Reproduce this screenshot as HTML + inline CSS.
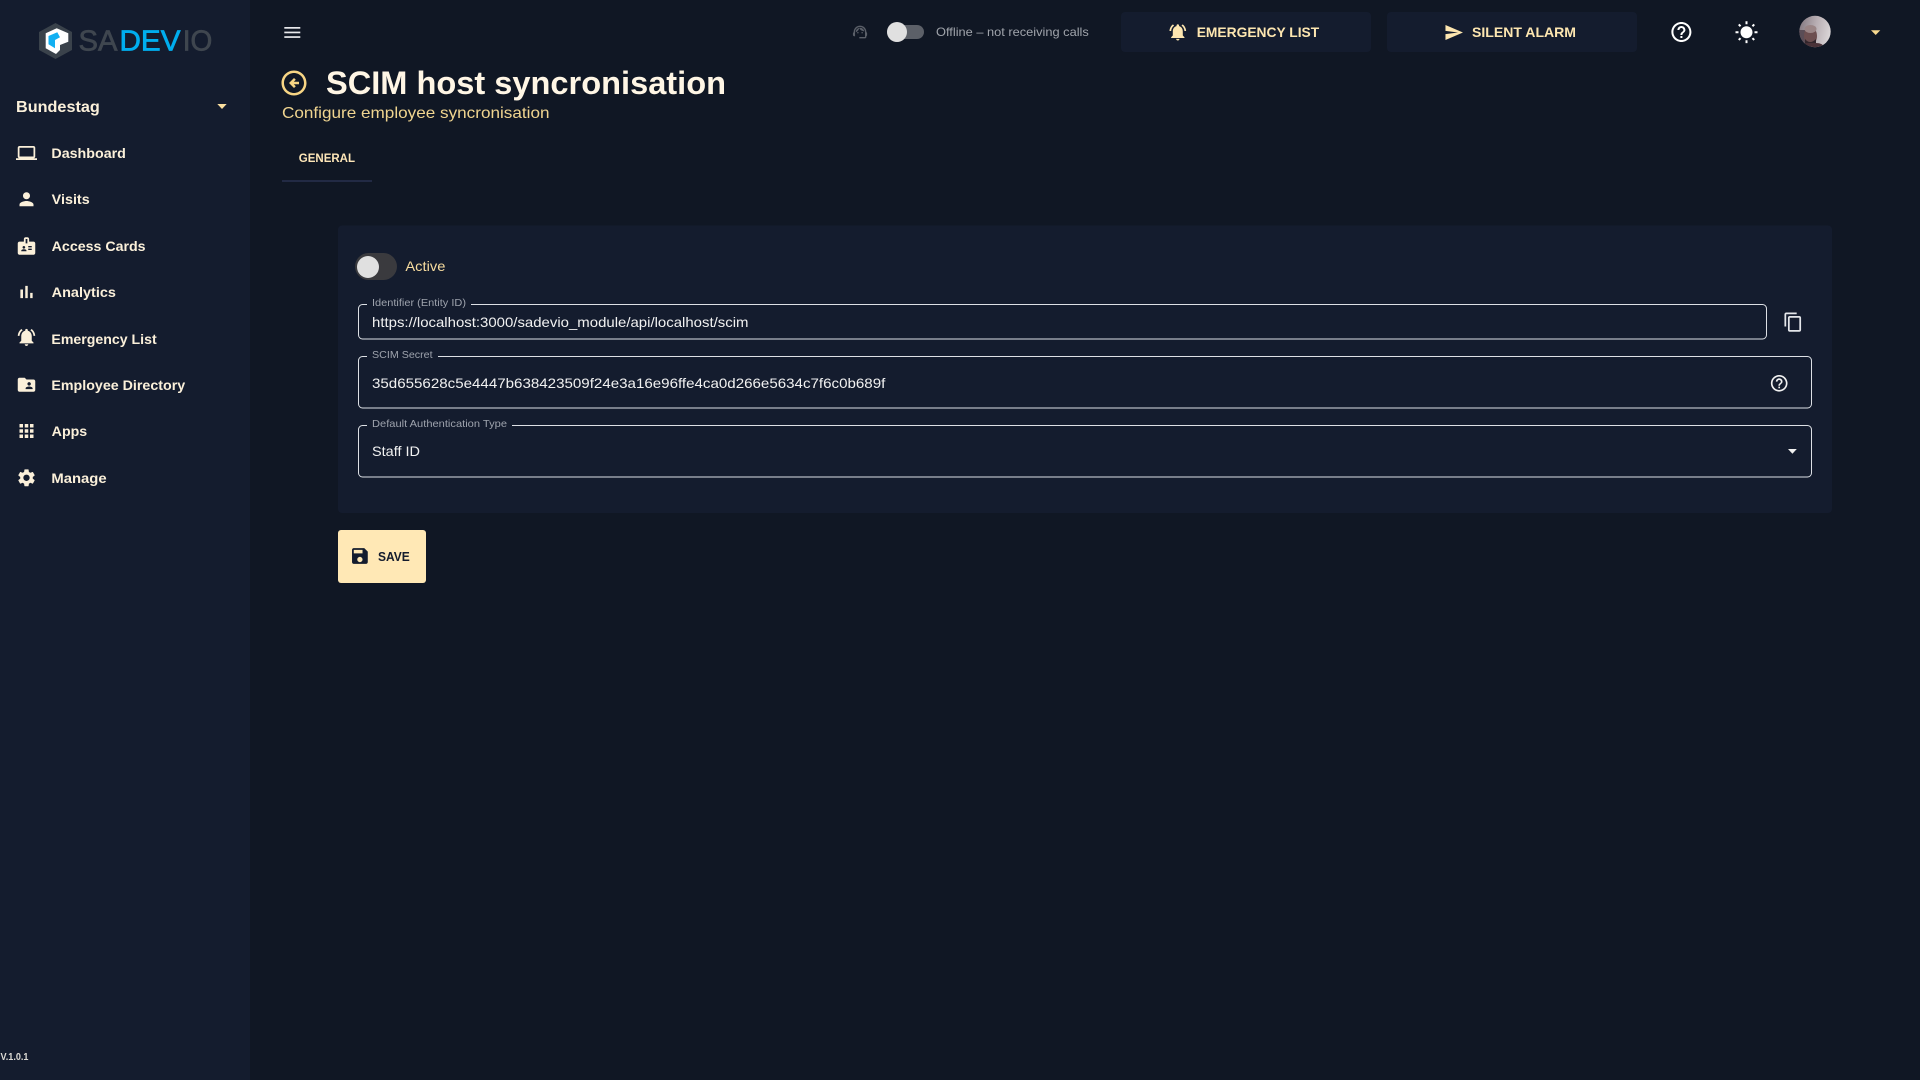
<!DOCTYPE html>
<html lang="en">
<head>
<meta charset="utf-8">
<title>SCIM host syncronisation</title>
<style>
html,body{margin:0;padding:0;width:1920px;height:1080px;overflow:hidden;background:#101724}
svg{display:block}
text{font-family:"Liberation Sans",sans-serif;white-space:pre}
.nav{font-size:14px;font-weight:700;fill:#fbf0da}
.lab{font-size:10.5px;fill:#9ea3ad}
.val{font-size:14px;fill:#f1f1f1}
</style>
</head>
<body>
<svg xmlns="http://www.w3.org/2000/svg" width="1920" height="1080" viewBox="0 0 1920 1080">
<rect width="1920" height="1080" fill="#101724"/>
<rect width="250" height="1080" fill="#141c2e"/>

<!-- logo -->
<polygon points="55.5,23 72,32 72,50 55.5,59 39,50 39,32" fill="#3a424b"/>
<polygon points="45.7,33.3 56.7,28.3 68.3,33.3 68.3,41.7 60,45 60,50 56,54 45.7,48.3" fill="#ffffff"/>
<polygon points="48.5,36 57.3,32.2 60,37.3 55,40 55,48.3 48.5,44.3" fill="#12b0f2"/>
<text x="78.5" y="50.5" font-size="28.5" fill="#3f464f" stroke="#3f464f" stroke-width=".7" textLength="39" lengthAdjust="spacingAndGlyphs">SA</text>
<text x="119.5" y="50.5" font-size="28.5" fill="#00aeef" stroke="#00aeef" stroke-width=".7" textLength="61" lengthAdjust="spacingAndGlyphs">DEV</text>
<text x="182.7" y="50.5" font-size="28.5" fill="#3f464f" stroke="#3f464f" stroke-width=".7" textLength="29.6" lengthAdjust="spacingAndGlyphs">IO</text>

<text x="16" y="112" font-size="16" font-weight="700" fill="#fbf0da" textLength="83.8" lengthAdjust="spacingAndGlyphs">Bundestag</text>
<polygon points="217.3,104 226.7,104 222,109" fill="#fbdf9f"/>

<!-- nav icons -->
<g fill="#fbf0da">
<path transform="translate(16 142.5) scale(.875)" d="M20 18c1.1 0 1.99-.9 1.99-2L22 6c0-1.1-.9-2-2-2H4c-1.1 0-2 .9-2 2v10c0 1.1.9 2 2 2H0v2h24v-2h-4zM4 6h16v10H4V6z"/>
<path transform="translate(16 188.7) scale(.875)" d="M12 12c2.21 0 4-1.79 4-4s-1.79-4-4-4-4 1.79-4 4 1.79 4 4 4zm0 2c-2.67 0-8 1.34-8 4v2h16v-2c0-2.66-5.33-4-8-4z"/>
<path transform="translate(16 235.5) scale(.875)" d="M20 7h-5V4c0-1.1-.9-2-2-2h-2c-1.1 0-2 .9-2 2v3H4c-1.1 0-2 .9-2 2v11c0 1.1.9 2 2 2h16c1.1 0 2-.9 2-2V9c0-1.1-.9-2-2-2zM9 12c.83 0 1.5.67 1.5 1.5S9.83 15 9 15s-1.5-.67-1.5-1.5S8.17 12 9 12zm3 6H6v-.43c0-.6.36-1.15.92-1.39C7.56 15.9 8.26 15.75 9 15.75s1.44.15 2.08.43c.55.24.92.78.92 1.39V18zm1-9h-2V4h2v5zm5 7.5h-4V15h4v1.5zm0-3h-4V12h4v1.5z"/>
<path transform="translate(16 281.5) scale(.875)" d="M5 9.2h3V19H5zM10.6 5h2.8v14h-2.8zm5.6 8H19v6h-2.8z"/>
<path transform="translate(16 326.7) scale(.875)" d="M7.58 4.08 6.15 2.65C3.75 4.48 2.17 7.3 2.03 10.5h2c.15-2.65 1.51-4.97 3.55-6.42zm12.39 6.42h2c-.15-3.2-1.73-6.02-4.12-7.85l-1.42 1.43c2.02 1.45 3.39 3.77 3.54 6.42zM18 11c0-3.07-1.64-5.64-4.5-6.32V4c0-.83-.67-1.5-1.5-1.5s-1.5.67-1.5 1.5v.68C7.63 5.36 6 7.92 6 11v5l-2 2v1h16v-1l-2-2v-5zm-6 11c.14 0 .27-.01.4-.04.65-.14 1.18-.58 1.44-1.18.1-.24.15-.5.15-.78h-4c.01 1.1.9 2 2.01 2z"/>
<path transform="translate(16 374.2) scale(.875)" d="M20 6h-8l-2-2H4c-1.1 0-1.99.9-1.99 2L2 18c0 1.1.9 2 2 2h16c1.1 0 2-.9 2-2V8c0-1.1-.9-2-2-2zm-5 3c1.1 0 2 .9 2 2s-.9 2-2 2-2-.9-2-2 .9-2 2-2zm4 8h-8v-1c0-1.33 2.67-2 4-2s4 .67 4 2v1z"/>
<path transform="translate(16 420.5) scale(.875)" d="M4 8h4V4H4v4zm6 12h4v-4h-4v4zm-6 0h4v-4H4v4zm0-6h4v-4H4v4zm6 0h4v-4h-4v4zm6-10v4h4V4h-4zm-6 4h4V4h-4v4zm6 6h4v-4h-4v4zm0 6h4v-4h-4v4z"/>
<path transform="translate(16 467.3) scale(.875)" d="M19.14 12.94c.04-.3.06-.61.06-.94 0-.32-.02-.64-.07-.94l2.03-1.58c.18-.14.23-.41.12-.61l-1.92-3.32c-.12-.22-.37-.29-.59-.22l-2.39.96c-.5-.38-1.03-.7-1.62-.94l-.36-2.54c-.04-.24-.24-.41-.48-.41h-3.84c-.24 0-.43.17-.47.41l-.36 2.54c-.59.24-1.13.57-1.62.94l-2.39-.96c-.22-.08-.47 0-.59.22L2.74 8.87c-.12.21-.08.47.12.61l2.03 1.58c-.05.3-.09.63-.09.94s.02.64.07.94l-2.03 1.58c-.18.14-.23.41-.12.61l1.92 3.32c.12.22.37.29.59.22l2.39-.96c.5.38 1.03.7 1.62.94l.36 2.54c.05.24.24.41.48.41h3.84c.24 0 .44-.17.47-.41l.36-2.54c.59-.24 1.13-.56 1.62-.94l2.39.96c.22.08.47 0 .59-.22l1.92-3.32c.12-.22.07-.47-.12-.61l-2.01-1.58zM12 15.6c-1.98 0-3.6-1.62-3.6-3.6s1.62-3.6 3.6-3.6 3.6 1.62 3.6 3.6-1.62 3.6-3.6 3.6z"/>
</g>

<!-- nav labels -->
<text class="nav" x="51.4" y="158" textLength="74.5" lengthAdjust="spacingAndGlyphs">Dashboard</text>
<text class="nav" x="51.7" y="204" textLength="38" lengthAdjust="spacingAndGlyphs">Visits</text>
<text class="nav" x="51.7" y="251" textLength="93.9" lengthAdjust="spacingAndGlyphs">Access Cards</text>
<text class="nav" x="51.7" y="297" textLength="64.2" lengthAdjust="spacingAndGlyphs">Analytics</text>
<text class="nav" x="51.4" y="344" textLength="105.3" lengthAdjust="spacingAndGlyphs">Emergency List</text>
<text class="nav" x="51.4" y="390" textLength="133.8" lengthAdjust="spacingAndGlyphs">Employee Directory</text>
<text class="nav" x="51.7" y="436" textLength="35.5" lengthAdjust="spacingAndGlyphs">Apps</text>
<text class="nav" x="51.4" y="483" textLength="55.2" lengthAdjust="spacingAndGlyphs">Manage</text>

<text x="0.5" y="1060" font-size="10" font-weight="700" fill="#dedcd6" textLength="28" lengthAdjust="spacingAndGlyphs">V.1.0.1</text>

<!-- top bar -->
<g fill="#e8e9ec">
<rect x="284.3" y="27" width="16" height="1.7"/>
<rect x="284.3" y="31.6" width="16" height="1.7"/>
<rect x="284.3" y="36.2" width="16" height="1.7"/>
</g>

<g transform="translate(851.5 23.5) scale(.71)" fill="#5a5f68">
<path d="M21 12.22C21 6.73 16.74 3 12 3c-4.69 0-9 3.65-9 9.28-.6.34-1 .98-1 1.72v2c0 1.1.9 2 2 2h1v-6.1c0-3.87 3.13-7 7-7s7 3.13 7 7V19h-8v2h8c1.1 0 2-.9 2-2v-1.22c.59-.31 1-.92 1-1.62v-2.3c0-.7-.41-1.31-1-1.64z"/>
<circle cx="9" cy="13" r="1"/><circle cx="15" cy="13" r="1"/>
<path d="M18 11.03C17.52 8.18 15.04 6 12.05 6c-3.03 0-6.29 2.51-6.03 6.45 2.47-1.01 4.33-3.21 4.86-5.89 1.31 2.63 4 4.44 7.12 4.47z"/>
</g>
<rect x="887" y="25" width="37" height="14" rx="7" fill="#5c6068"/>
<circle cx="897" cy="32" r="10" fill="#e0e0e0"/>
<text x="936" y="36" font-size="12" fill="#a0a4ab" textLength="152.8" lengthAdjust="spacingAndGlyphs">Offline – not receiving calls</text>

<rect x="1121" y="12" width="250" height="40" rx="4" fill="#141c2e"/>
<path transform="translate(1167.8 22.2) scale(.8333)" fill="#fde6b0" d="M7.58 4.08 6.15 2.65C3.75 4.48 2.17 7.3 2.03 10.5h2c.15-2.65 1.51-4.97 3.55-6.42zm12.39 6.42h2c-.15-3.2-1.73-6.02-4.12-7.85l-1.42 1.43c2.02 1.45 3.39 3.77 3.54 6.42zM18 11c0-3.07-1.64-5.64-4.5-6.32V4c0-.83-.67-1.5-1.5-1.5s-1.5.67-1.5 1.5v.68C7.63 5.36 6 7.92 6 11v5l-2 2v1h16v-1l-2-2v-5zm-6 11c.14 0 .27-.01.4-.04.65-.14 1.18-.58 1.44-1.18.1-.24.15-.5.15-.78h-4c.01 1.1.9 2 2.01 2z"/>
<text x="1196.7" y="37" font-size="14" font-weight="700" fill="#fde6b0" textLength="122.5" lengthAdjust="spacingAndGlyphs">EMERGENCY LIST</text>

<rect x="1387" y="12" width="250" height="40" rx="4" fill="#141c2e"/>
<path transform="translate(1443.8 22.5) scale(.8333)" fill="#fde6b0" d="M2.01 21 23 12 2.01 3 2 10l15 2-15 2z"/>
<text x="1472" y="37" font-size="14" font-weight="700" fill="#fde6b0" textLength="104" lengthAdjust="spacingAndGlyphs">SILENT ALARM</text>

<path transform="translate(1669.4 20)" fill="#ffffff" d="M11 18h2v-2h-2v2zm1-16C6.48 2 2 6.48 2 12s4.48 10 10 10 10-4.48 10-10S17.52 2 12 2zm0 18c-4.41 0-8-3.59-8-8s3.59-8 8-8 8 3.59 8 8-3.59 8-8 8zm0-14c-2.21 0-4 1.79-4 4h2c0-1.1.9-2 2-2s2 .9 2 2c0 2-3 1.75-3 5h2c0-2.25 3-2.5 3-5 0-2.21-1.79-4-4-4z"/>
<path transform="translate(1734.5 20.7)" fill="#ffffff" d="M6.76 4.84l-1.8-1.79-1.41 1.41 1.79 1.79 1.42-1.41zM4 10.5H1v2h3v-2zm9-9.95h-2V3.5h2V.55zm7.45 3.91l-1.41-1.41-1.79 1.79 1.41 1.41 1.79-1.79zm-3.21 13.7l1.79 1.8 1.41-1.41-1.8-1.79-1.4 1.4zM20 10.5v2h3v-2h-3zm-8-5c-3.31 0-6 2.69-6 6s2.69 6 6 6 6-2.69 6-6-2.69-6-6-6zm-1 16.95h2V19.5h-2v2.95zm-7.45-3.91l1.41 1.41 1.79-1.8-1.41-1.41-1.79 1.8z"/>

<!-- avatar -->
<defs>
<clipPath id="av"><circle cx="1815" cy="31.5" r="15.7"/></clipPath>
<linearGradient id="avbg" x1="0" y1="0" x2="1" y2="0.2">
<stop offset="0" stop-color="#7f747c"/>
<stop offset=".55" stop-color="#b8aeb3"/>
<stop offset="1" stop-color="#d9d4d6"/>
</linearGradient>
</defs>
<g clip-path="url(#av)">
<rect x="1799" y="15" width="33" height="33" fill="url(#avbg)"/>
<rect x="1799" y="30" width="10" height="18" fill="#5a4d56"/>
<ellipse cx="1810.5" cy="36" rx="6.5" ry="9" fill="#6d4f50"/>
<ellipse cx="1810.5" cy="29" rx="6" ry="4" fill="#9a8586"/>
<path d="M1805 39q5 6 11 0v6h-11z" fill="#33262c"/>
<path d="M1800 48q2-5 8-5h8q7 0 9 5z" fill="#4a3238"/>
</g>
<polygon points="1871,30.3 1880.3,30.3 1875.7,35" fill="#f8d98f"/>

<!-- header -->
<path transform="translate(279 68) scale(1.25)" fill="#f7d584" d="M2 12c0 5.52 4.48 10 10 10s10-4.48 10-10S17.52 2 12 2 2 6.48 2 12zm18 0c0 4.42-3.58 8-8 8s-8-3.58-8-8 3.58-8 8-8 8 3.58 8 8zM8 12l4-4 1.41 1.41L11.83 11H16v2h-4.17l1.59 1.59L12 16l-4-4z"/>
<text x="326" y="94" font-size="32" font-weight="700" fill="#fff6e5" textLength="400" lengthAdjust="spacingAndGlyphs">SCIM host syncronisation</text>
<text x="282" y="118" font-size="16" fill="#f0d590" textLength="267.5" lengthAdjust="spacingAndGlyphs">Configure employee syncronisation</text>
<text x="298.8" y="162" font-size="12" font-weight="700" fill="#fde6b8" textLength="56.2" lengthAdjust="spacingAndGlyphs">GENERAL</text>
<rect x="282" y="180" width="90" height="2" fill="#222a44"/>

<!-- card -->
<rect x="338" y="225.5" width="1494" height="287.5" rx="4" fill="#141c2e"/>
<rect x="355" y="253" width="42" height="27" rx="13.5" fill="#3a3a3e"/>
<circle cx="368" cy="267" r="11" fill="#e0e0e0"/>
<text x="405.4" y="271" font-size="14" fill="#f7dc9f" textLength="40" lengthAdjust="spacingAndGlyphs">Active</text>

<g fill="none" stroke="#dde0e5" stroke-width="1">
<path d="M367 304.5H362.5a4 4 0 0 0-4 4V335a4 4 0 0 0 4 4H1762.5a4 4 0 0 0 4-4V308.5a4 4 0 0 0-4-4H471"/>
<path d="M367 356.5H362.5a4 4 0 0 0-4 4V404a4 4 0 0 0 4 4H1807.5a4 4 0 0 0 4-4V360.5a4 4 0 0 0-4-4H438"/>
<path d="M367 425.5H362.5a4 4 0 0 0-4 4V473a4 4 0 0 0 4 4H1807.5a4 4 0 0 0 4-4V429.5a4 4 0 0 0-4-4H512"/>
</g>

<text class="lab" x="372" y="306" textLength="94" lengthAdjust="spacingAndGlyphs">Identifier (Entity ID)</text>
<text class="val" x="372" y="327" textLength="376.5" lengthAdjust="spacingAndGlyphs">https://localhost:3000/sadevio_module/api/localhost/scim</text>
<path transform="translate(1782.7 311.6) scale(.875)" fill="#e4e6ea" d="M16 1H4c-1.1 0-2 .9-2 2v14h2V3h12V1zm3 4H8c-1.1 0-2 .9-2 2v14c0 1.1.9 2 2 2h11c1.1 0 2-.9 2-2V7c0-1.1-.9-2-2-2zm0 16H8V7h11v14z"/>

<text class="lab" x="372" y="358" textLength="60.6" lengthAdjust="spacingAndGlyphs">SCIM Secret</text>
<text class="val" x="372" y="388" textLength="513.3" lengthAdjust="spacingAndGlyphs">35d655628c5e4447b638423509f24e3a16e96ffe4ca0d266e5634c7f6c0b689f</text>
<path transform="translate(1769.2 373.3) scale(.8333)" fill="#f1f1f1" d="M11 18h2v-2h-2v2zm1-16C6.48 2 2 6.48 2 12s4.48 10 10 10 10-4.48 10-10S17.52 2 12 2zm0 18c-4.41 0-8-3.59-8-8s3.59-8 8-8 8 3.59 8 8-3.59 8-8 8zm0-14c-2.21 0-4 1.79-4 4h2c0-1.1.9-2 2-2s2 .9 2 2c0 2-3 1.75-3 5h2c0-2.25 3-2.5 3-5 0-2.21-1.79-4-4-4z"/>

<text class="lab" x="372" y="427" textLength="135" lengthAdjust="spacingAndGlyphs">Default Authentication Type</text>
<text class="val" x="372" y="456" textLength="48" lengthAdjust="spacingAndGlyphs">Staff ID</text>
<polygon points="1788,449 1796.8,449 1792.4,453.7" fill="#f1f1f1"/>

<!-- save -->
<rect x="338" y="530" width="88" height="53" rx="3" fill="#ffe8b5"/>
<path transform="translate(349.4 545.5) scale(.875)" fill="#141c2e" d="M17 3H5c-1.11 0-2 .9-2 2v14c0 1.1.89 2 2 2h14c1.1 0 2-.9 2-2V7l-4-4zm-5 16c-1.66 0-3-1.34-3-3s1.34-3 3-3 3 1.34 3 3-1.34 3-3 3zm3-10H5V5h10v4z"/>
<text x="378" y="561" font-size="12.5" font-weight="700" fill="#141c2e" textLength="31.8" lengthAdjust="spacingAndGlyphs">SAVE</text>
</svg>
</body>
</html>
